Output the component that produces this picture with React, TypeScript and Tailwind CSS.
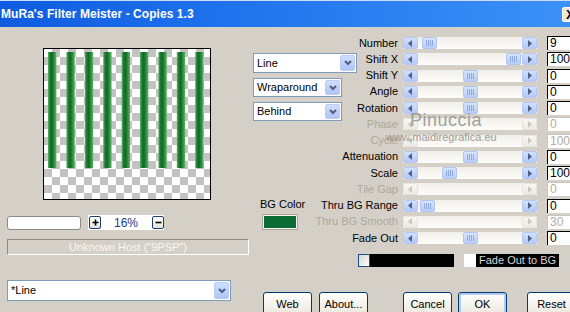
import React from 'react';

type Row = { label: string; val: string; thumb: number | null };

const rows: Row[] = [
  { label: 'Number', val: '9', thumb: 4 },
  { label: 'Shift X', val: '100', thumb: 88 },
  { label: 'Shift Y', val: '0', thumb: 45 },
  { label: 'Angle', val: '0', thumb: 45 },
  { label: 'Rotation', val: '0', thumb: 45 },
  { label: 'Phase', val: '0', thumb: null },
  { label: 'Cycle', val: '100', thumb: null },
  { label: 'Attenuation', val: '0', thumb: 45 },
  { label: 'Scale', val: '100', thumb: 24 },
  { label: 'Tile Gap', val: '0', thumb: null },
  { label: 'Thru BG Range', val: '0', thumb: 2 },
  { label: 'Thru BG Smooth', val: '30', thumb: null },
  { label: 'Fade Out', val: '0', thumb: 45 },
];

function Arrow({ dir, en }: { dir: 'l' | 'r'; en: boolean }) {
  return (
    <svg width="5" height="7" viewBox="0 0 5 7">
      <path d={dir === 'l' ? 'M4 0 L0 3.5 L4 7 Z' : 'M1 0 L5 3.5 L1 7 Z'} fill={en ? '#4d6185' : '#c9c7be'} />
    </svg>
  );
}

function SBtn({ dir, en }: { dir: 'l' | 'r'; en: boolean }) {
  return (
    <div
      className={
        en
          ? 'flex w-[15px] shrink-0 items-center justify-center rounded-[2px] border border-[#b7c9f2] bg-gradient-to-b from-[#d3e0fd] to-[#b3c8f5]'
          : 'flex w-[15px] shrink-0 items-center justify-center rounded-[2px] border border-[#e6e4dc] bg-gradient-to-b from-[#f7f6f2] to-[#edebe4]'
      }
    >
      <Arrow dir={dir} en={en} />
    </div>
  );
}

function Thumb() {
  return (
    <div className="flex w-[15px] shrink-0 items-center justify-center gap-[1px] rounded-[2px] border border-[#b1c5f3] bg-gradient-to-b from-[#d8e4fd] to-[#b9cdf8]">
      <div className="h-[6px] w-px bg-[#8fa9e2]" />
      <div className="h-[6px] w-px bg-[#8fa9e2]" />
      <div className="h-[6px] w-px bg-[#8fa9e2]" />
      <div className="h-[6px] w-px bg-[#8fa9e2]" />
    </div>
  );
}

function Scroll({ thumb }: { thumb: number | null }) {
  const en = thumb !== null;
  return (
    <div className="flex h-[12px] w-[134px] bg-gradient-to-b from-[#f1efe9] to-[#fdfdfb]">
      <SBtn dir="l" en={en} />
      <div className="flex flex-1">
        {en && (
          <>
            <div className="shrink-0" style={{ width: thumb as number }} />
            <Thumb />
          </>
        )}
      </div>
      <SBtn dir="r" en={en} />
    </div>
  );
}

function Chevron() {
  return (
    <svg width="8" height="6" viewBox="0 0 8 6">
      <path d="M1 1 L4 4 L7 1" fill="none" stroke="#4d6185" strokeWidth="2" />
    </svg>
  );
}

function Combo({ text, cls }: { text: string; cls: string }) {
  return (
    <div className={'flex items-stretch border border-[#7f9db9] bg-white ' + cls}>
      <div className="flex flex-1 items-center pl-[3px] text-[11px] text-black">{text}</div>
      <div className="m-[1px] flex w-[15px] items-center justify-center rounded-[2px] border border-[#bccdf5] bg-gradient-to-b from-[#d0ddfd] to-[#b0c5f5]">
        <Chevron />
      </div>
    </div>
  );
}

function Btn({ text, cls }: { text: string; cls?: string }) {
  return (
    <div
      className={
        'flex h-[23px] w-[49px] shrink-0 items-center justify-center rounded-[3px] border border-[#003c74] bg-gradient-to-b from-[#ffffff] to-[#ebe9df] text-[11px] text-black ' +
        (cls || '')
      }
    >
      {text}
    </div>
  );
}

function Preview() {
  const stripes = Array.from({ length: 9 }, (_, i) => 4 + i * 18.4);
  return (
    <div className="ml-[36px] mt-[21px] h-[152px] w-[168px] border border-black bg-white">
      <svg width="166" height="150" viewBox="0 0 166 150">
        <defs>
          <pattern id="chk" width="16" height="16" patternUnits="userSpaceOnUse">
            <rect width="16" height="16" fill="#ffffff" />
            <rect x="8" y="0" width="8" height="8" fill="#c3c3c3" />
            <rect x="0" y="8" width="8" height="8" fill="#c3c3c3" />
          </pattern>
          <linearGradient id="stripe" x1="0" x2="1" y1="0" y2="0">
            <stop offset="0" stopColor="#5db868" />
            <stop offset="0.22" stopColor="#1f7d32" />
            <stop offset="0.45" stopColor="#146627" />
            <stop offset="0.72" stopColor="#2c8c3e" />
            <stop offset="1" stopColor="#5fb86a" />
          </linearGradient>
        </defs>
        <rect width="166" height="150" fill="url(#chk)" />
        {stripes.map((x, i) => (
          <rect key={i} x={x} y="3" width="8.4" height="116" fill="url(#stripe)" />
        ))}
      </svg>
    </div>
  );
}

function SmallBtn({ minus }: { minus?: boolean }) {
  return (
    <div className="flex h-[13px] w-[12px] items-center justify-center rounded-[2px] border border-[#1c3f6e] bg-gradient-to-b from-white to-[#e4e2da]">
      <svg width="7" height="7" viewBox="0 0 7 7">
        <path d={minus ? 'M0.5 3.5 H6.5' : 'M0.5 3.5 H6.5 M3.5 0.5 V6.5'} stroke="#000" strokeWidth="1.6" />
      </svg>
    </div>
  );
}

export default function App() {
  return (
    <div className="relative flex h-[312px] w-[570px] flex-col overflow-hidden bg-[#d4d0c8] font-['Liberation_Sans',Arial,sans-serif]">
      {/* Title bar */}
      <div className="flex h-[27px] shrink-0 items-center border-t border-[#cfdcf7] bg-gradient-to-r from-[#0f5ce0] via-[#2478ee] to-[#3b91f7]">
        <div className="pl-[1px] text-[12px] font-bold tracking-[0.05px] text-white">MuRa's Filter Meister - Copies 1.3</div>
        <div className="flex-1" />
        <div className="mr-[-12px] flex h-[15px] w-[20px] shrink-0 items-center rounded-[2px] border border-white bg-[#ece9d8] pl-[3px] text-[13px] font-bold leading-none text-black">
          X
        </div>
      </div>

      {/* Body */}
      <div className="flex min-h-0 flex-1">
        {/* Left column */}
        <div className="flex w-[250px] shrink-0 flex-col pl-[7px]">
          <Preview />
          <div className="mt-[15px] flex h-[15px] items-center">
            <div className="h-[14px] w-[74px] rounded-[3px] border border-[#8a8a8a] bg-white" />
            <div className="ml-[7px] flex h-[15px] w-[76px] items-center bg-white pl-[1px]">
              <SmallBtn />
              <div className="ml-[13px] text-[12px] leading-none text-[#1c3a86]">16%</div>
              <div className="ml-auto">
                <SmallBtn minus />
              </div>
            </div>
          </div>
          <div className="mt-[9px] flex h-[16px] w-[242px] items-center justify-center border-b border-l border-r border-t border-b-white border-l-[#8c8a84] border-r-white border-t-[#8c8a84] text-[11px] text-[#f7f7f5]">
            Unknown Host ("9PSP")
          </div>
          <Combo text="*Line" cls="mt-[25px] h-[21px] w-[224px]" />
        </div>

        {/* Right part */}
        <div className="flex flex-1 flex-col">
          <div className="flex">
            {/* combos */}
            <div className="ml-[3px] flex w-[104px] shrink-0 flex-col">
              <Combo text="Line" cls="mt-[26px] h-[20px] w-[104px]" />
              <Combo text="Wraparound" cls="mt-[5px] h-[19px] w-[89px]" />
              <Combo text="Behind" cls="mt-[5px] h-[19px] w-[89px]" />
              <div className="ml-[7px] mt-[77px] text-[11px] leading-[13px] text-black">BG Color</div>
              <div className="ml-[10px] mt-[4px] h-[14px] w-[34px] border border-[#f4f3ee] bg-[#0c6a34] shadow-[0_0_0_1px_#a9a59b]" />
            </div>
            {/* sliders */}
            <div className="mt-[8px] flex flex-col">
              {rows.map((r) => {
                const en = r.thumb !== null;
                return (
                  <div key={r.label} className="flex h-[16.25px] items-center">
                    <div
                      className={
                        'flex w-[41px] shrink-0 justify-end whitespace-nowrap text-[11px] font-normal leading-none ' +
                        (en ? 'text-black' : 'text-[#aca899]')
                      }
                    >
                      {r.label}
                    </div>
                    <div className="ml-[5px]">
                      <Scroll thumb={r.thumb} />
                    </div>
                    <div
                      className={
                        'ml-[10px] h-[14px] w-[30px] shrink-0 bg-white pl-[2px] text-[12px] leading-[13px] ' +
                        (en ? 'border-l border-t border-black text-black' : 'border-l border-t border-[#c9c6bd] text-[#b2aea3]')
                      }
                    >
                      {r.val}
                    </div>
                  </div>
                );
              })}
            </div>
          </div>

          {/* black bar row */}
          <div className="ml-[108px] mt-[8px] flex h-[13px] items-center">
            <div className="h-[13px] w-[12px] border border-[#1f4f82] bg-gradient-to-br from-[#d6d5cf] to-white" />
            <div className="h-[13px] w-[84px] bg-black" />
            <div className="ml-[10px] h-[13px] w-[12px] bg-white" />
            <div className="flex h-[13px] w-[83px] items-center bg-black pl-[3px] text-[11px] leading-none text-[#d6d6d6]">
              Fade Out to BG
            </div>
          </div>

          {/* buttons */}
          <div className="ml-[13px] mt-[25px] flex">
            <Btn text="Web" />
            <Btn text="About..." cls="ml-[7px]" />
            <Btn text="Cancel" cls="ml-[35px]" />
            <Btn text="OK" cls="ml-[6px] shadow-[inset_0_0_0_2px_#b4cbf1]" />
            <Btn text="Reset" cls="ml-[20px]" />
          </div>
        </div>
      </div>

      {/* watermark */}
      <div className="pointer-events-none absolute left-[410px] top-[111px] text-[18px] leading-none tracking-[0.5px] text-[#8d8d8d] opacity-80">
        Pinuccia
      </div>
      <div className="pointer-events-none absolute left-[386px] top-[132px] text-[11px] leading-none text-[#8a8a8a] opacity-80">
        www.maidiregrafica.eu
      </div>
    </div>
  );
}
